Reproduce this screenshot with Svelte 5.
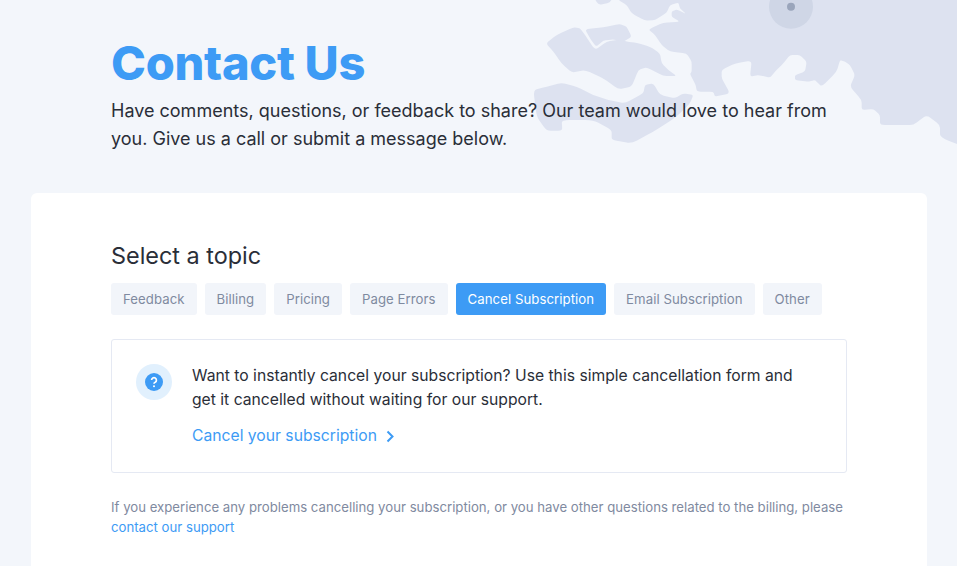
<script lang="ts">
  const topics = [
    "Feedback",
    "Billing",
    "Pricing",
    "Page Errors",
    "Cancel Subscription",
    "Email Subscription",
    "Other",
  ];
  let active = $state("Cancel Subscription");

  // coastline outlines, corners get rounded off in smooth()
  const coast = [
    [265,-40],[265,0],[290,15],[305,40],[345,62],[375,60],[410,38],[420,15],[445,8],[450,25],[468,42],[440,28],[425,35],[425,50],[450,65],[400,68],[355,88],[375,105],[395,135],[420,155],[470,160],[485,185],[485,215],[480,222],[497,255],[500,272],[510,275],[550,275],[555,290],[600,280],[575,235],[575,210],[615,190],[665,182],[660,230],[685,225],[720,233],[735,215],[760,190],[780,165],[810,165],[830,185],[825,215],[795,225],[795,240],[835,245],[855,240],[875,260],[920,215],[930,180],[945,185],[960,195],[975,225],[960,260],[995,300],[995,330],[1030,327],[1050,345],[1050,375],[1110,375],[1150,375],[1190,345],[1230,375],[1230,412],[1340,455],[1340,-40],
  ];
  const islands = [
    [[48,130],[80,105],[130,82],[150,85],[165,105],[195,150],[230,125],[270,118],[290,125],[320,128],[360,140],[390,160],[395,190],[415,210],[440,228],[400,228],[350,202],[325,210],[305,260],[265,268],[220,235],[165,210],[125,218],[95,190],[70,155]],
    [[165,88],[220,82],[270,72],[290,80],[305,110],[280,125],[250,118],[220,122],[198,140],[180,115]],
    [[10,270],[50,260],[95,248],[140,260],[190,285],[235,300],[285,310],[340,280],[345,255],[370,250],[390,285],[435,295],[460,280],[490,285],[480,310],[440,350],[370,395],[305,430],[245,420],[245,390],[190,360],[95,360],[97,392],[50,392],[20,350]],
    [[185,-20],[205,15],[240,8],[255,-20]],
  ];

  function smooth(pts: number[][]): string {
    const toward = (a: number[], b: number[]) => `${a[0] + (b[0] - a[0]) * 0.25} ${a[1] + (b[1] - a[1]) * 0.25}`;
    let d = "";
    pts.forEach((p, i) => {
      const prev = pts[(i + pts.length - 1) % pts.length];
      const next = pts[(i + 1) % pts.length];
      d += `${i ? "L" : "M"}${toward(p, prev)}Q${p[0]} ${p[1]} ${toward(p, next)}`;
    });
    return d + "Z";
  }
</script>

<div class="page">
  <svg class="map" viewBox="-30 0 1311 600" aria-hidden="true">
    <path d={smooth(coast)} />
    {#each islands as island}
      <path d={smooth(island)} />
    {/each}
    <circle class="halo" cx="783" cy="20" r="66" />
    <circle class="dot" cx="783" cy="20" r="12" />
    <circle class="edge" cx="1330" cy="738" r="54" />
  </svg>

  <header class="intro">
    <h1>Contact Us</h1>
    <p>Have comments, questions, or feedback to share? Our team would love to hear from you. Give us a call or submit a message below.</p>
  </header>

  <main class="card">
    <h2>Select a topic</h2>
    <div class="topics">
      {#each topics as topic}
        <button class="chip" class:active={topic === active} onclick={() => (active = topic)}>{topic}</button>
      {/each}
    </div>

    <section class="notice">
      <span class="badge">
        <svg viewBox="0 0 18 18" width="18" height="18" aria-hidden="true">
          <circle cx="9" cy="9" r="9" fill="#3d9bf5" />
          <path d="M6.6 7.1a2.4 2.4 0 1 1 3.6 2.1c-.8.4-1.2.8-1.2 1.5" fill="none" stroke="#fff" stroke-width="1.7" />
          <circle cx="9" cy="13.2" r="1" fill="#fff" />
        </svg>
      </span>
      <div class="notice-body">
        <p>Want to instantly cancel your subscription? Use this simple cancellation form and get it cancelled without waiting for our support.</p>
        <a href="#cancel" class="cancel-link">
          Cancel your subscription
          <svg viewBox="0 0 9 13" width="9" height="13" aria-hidden="true">
            <path d="M1.5 1.5L6.5 6.5L1.5 11.5" fill="none" stroke="currentColor" stroke-width="2" />
          </svg>
        </a>
      </div>
    </section>

    <p class="footnote">If you experience any problems cancelling your subscription, or you have other questions related to the billing, please <a href="#support">contact our support</a></p>
  </main>
</div>

<style>
  :global(body) {
    background: #f3f6fb;
  }

  .page {
    position: relative;
    height: 566px;
    overflow: hidden;
    background: #f3f6fb;
    font-family: Inter, "Liberation Sans", sans-serif;
    color: #2a2e38;
  }

  .map {
    position: absolute;
    top: 0;
    right: 0;
    width: 437px;
    height: 200px;
    fill: #dde2f0;
  }

  .halo { fill: #cfd6e6; }
  .dot { fill: #9aa5bb; }
  .edge { fill: #e6ebf4; }

  .intro {
    position: relative;
    padding: 33px 0 0 111px;
    height: 160px;
    box-sizing: border-box;
  }

  h1 {
    margin: 0;
    font-size: 47px;
    line-height: 60px;
    font-weight: 800;
    letter-spacing: -0.3px;
    color: #3d9bf5;
  }

  .intro p {
    margin: 4px 0 0;
    width: 735px;
    font-size: 18px;
    line-height: 28px;
  }

  .card {
    position: relative;
    margin: 33px 30px 0 31px;
    padding: 47px 80px 0;
    height: 400px;
    box-sizing: border-box;
    background: #fff;
    border-radius: 6px 6px 0 0;
  }

  h2 {
    margin: 0;
    font-size: 23.4px;
    line-height: 32px;
    font-weight: 400;
  }

  .topics {
    display: flex;
    gap: 8px;
    margin-top: 11px;
  }

  .chip {
    height: 32px;
    padding: 0 12px;
    border: 0;
    border-radius: 3px;
    background: #f2f5fa;
    color: #7f8aa0;
    font: 400 13.2px Inter, "Liberation Sans", sans-serif;
    letter-spacing: 0.055px;
    white-space: nowrap;
  }

  .chip.active {
    background: #3d9bf5;
    color: #fff;
  }

  .notice {
    display: flex;
    gap: 20px;
    width: 736px;
    height: 134px;
    box-sizing: border-box;
    margin-top: 24px;
    padding: 24px;
    border: 1px solid #e5e9f3;
    border-radius: 3px;
  }

  .badge {
    flex: none;
    width: 36px;
    height: 36px;
    border-radius: 50%;
    background: #e1f0fd;
    display: flex;
    align-items: center;
    justify-content: center;
  }

  .notice-body p {
    margin: 0;
    width: 615px;
    font-size: 15.7px;
    line-height: 24px;
  }

  .cancel-link {
    display: inline-flex;
    align-items: center;
    gap: 9px;
    margin-top: 12px;
    font-size: 15.7px;
    line-height: 24px;
    color: #3d9bf5;
    text-decoration: none;
  }

  .footnote {
    margin: 24px 0 0;
    width: 736px;
    font-size: 13.2px;
    line-height: 20px;
    color: #7f8aa0;
  }

  .footnote a {
    color: #3d9bf5;
    text-decoration: none;
  }
</style>
